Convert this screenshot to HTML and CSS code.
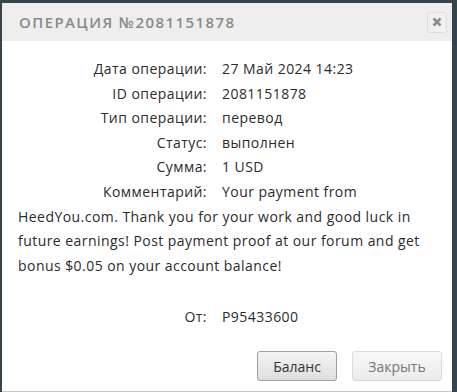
FILE: index.html
```html
<!DOCTYPE html>
<html>
<head>
<meta charset="utf-8">
<link rel="stylesheet" href="styles.css">
</head>
<body>
<div class="dialog">
  <div class="header">
    <span class="title">Операция №2081151878</span>
    <button class="close" aria-label="close">
      <svg width="10" height="10" viewBox="0 0 10 10"><path d="M1.5 1.5 L8.5 8.5 M8.5 1.5 L1.5 8.5" stroke="#8c8c8c" stroke-width="2.6" stroke-linecap="butt"/></svg>
    </button>
  </div>
  <div class="content">
    <div class="row"><span class="label">Дата операции:</span><span class="value">27 Май 2024 14:23</span></div>
    <div class="row"><span class="label">ID операции:</span><span class="value">2081151878</span></div>
    <div class="row"><span class="label">Тип операции:</span><span class="value">перевод</span></div>
    <div class="row"><span class="label">Статус:</span><span class="value">выполнен</span></div>
    <div class="row"><span class="label">Сумма:</span><span class="value">1 USD</span></div>
    <div class="row"><span class="label">Комментарий:</span> Your payment from HeedYou.com. Thank you for your work and good luck in future earnings! Post payment proof at our forum and get bonus $0.05 on your account balance!</div>
    <div class="row spacer"></div>
    <div class="row"><span class="label">От:</span><span class="value">P95433600</span></div>
  </div>
  <div class="footer">
    <button class="btn btn-primary">Баланс</button>
    <button class="btn btn-muted">Закрыть</button>
  </div>
</div>
</body>
</html>
```
FILE: styles.css
```css
html, body {
  margin: 0;
  padding: 0;
  height: 100%;
}
body {
  background: #37444c;
  font-family: "Open Sans", sans-serif;
}
.dialog {
  margin: 3px 5px 0 2px;
  height: 388px;
  background: #fff;
  border-bottom: 1px solid #c8c8c8;
  display: flex;
  flex-direction: column;
}
.header {
  height: 38px;
  background: #eeeeee;
  display: flex;
  align-items: center;
  justify-content: space-between;
  padding: 0 5px 0 17px;
}
.title {
  text-transform: uppercase;
  color: #8a8a8a;
  font-size: 15px;
  font-weight: 600;
  letter-spacing: 1.4px;
}
.close {
  width: 20px;
  height: 21px;
  border: 1px solid #dcdcdc;
  border-radius: 3px;
  background: #f0f0f0;
  padding: 0;
  display: flex;
  align-items: center;
  justify-content: center;
}
.content {
  padding: 16px 16px 0 16px;
  font-size: 14px;
  letter-spacing: 0.45px;
  line-height: 24.6px;
  color: #2b2b2b;
  flex: 1;
}
.row {
  min-height: 24.6px;
}
.spacer {
  height: 27px;
}
.label {
  display: inline-block;
  width: 189px;
  text-align: right;
  margin-right: 11px;
}
.value {
  margin-left: 4px;
}
.footer {
  display: flex;
  justify-content: flex-end;
  gap: 15px;
  padding: 0 10px 10px 0;
}
.btn {
  height: 30px;
  border-radius: 3px;
  font-family: "Open Sans", sans-serif;
  font-size: 14px;
  padding: 0;
}
.btn-primary {
  width: 80px;
  color: #333;
  border: 1px solid #a0a0a0;
  background: linear-gradient(#f4f4f4, #dedede);
}
.btn-muted {
  width: 90px;
  color: #777;
  border: 1px solid #dadada;
  background: linear-gradient(#f8f8f8, #ebebeb);
}
```
